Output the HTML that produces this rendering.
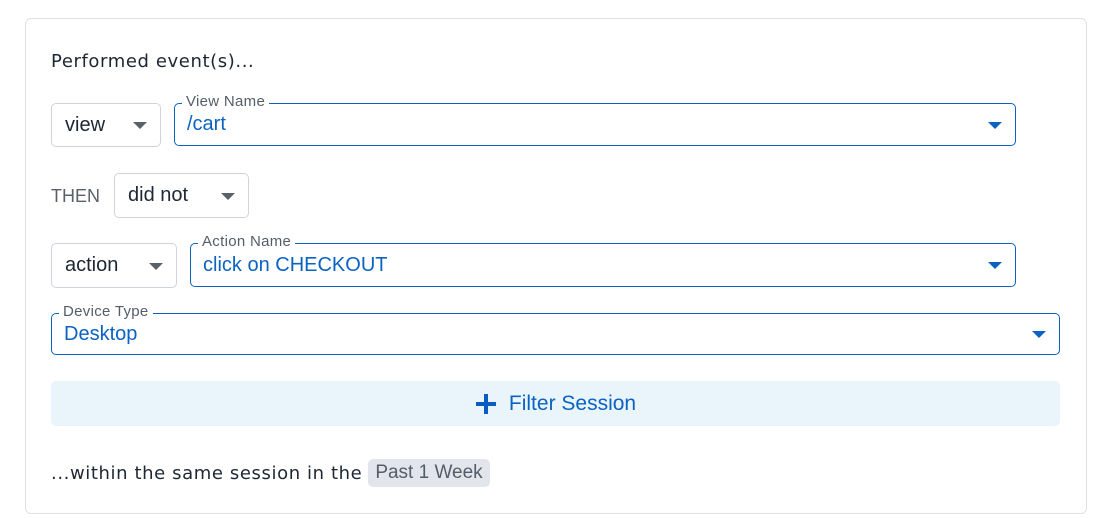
<!DOCTYPE html>
<html><head><style>
body{margin:0;width:1100px;height:518px;background:#fff;font-family:"Liberation Sans",sans-serif;position:relative;overflow:hidden}
.a{position:absolute;box-sizing:border-box}
.card{left:25px;top:18px;width:1062px;height:496px;border:1px solid #dfe1e6;border-radius:6px}
.sel{border:1px solid #cfd3dc;border-radius:5px;font-size:20px;color:#1d2633;display:flex;align-items:center;padding-left:13px}
.fld{border:1px solid #0a63c2;border-radius:5px;font-size:20px;color:#0a63c2;display:flex;align-items:center;padding-left:12px}
.lbl{position:absolute;top:-11px;left:7px;background:#fff;padding:0 4px;font-size:15px;color:#555d68;line-height:18px;letter-spacing:.3px}
.tri{position:absolute;width:0;height:0;border-left:7px solid transparent;border-right:7px solid transparent;border-top:7px solid #5b616b;top:50%;margin-top:-3px}
.fld .tri{border-top-color:#0a63c2}
.dj{font-family:"DejaVu Sans",sans-serif;letter-spacing:.6px}
</style></head><body>
<div class="a card"></div>
<div class="a dj" style="left:51px;top:51px;font-size:18px;color:#1d2633">Performed event(s)...</div>
<div class="a sel" style="left:51px;top:103px;width:110px;height:44px">view<span class="tri" style="right:13px"></span></div>
<div class="a fld" style="left:174px;top:103px;width:842px;height:43px"><span class="lbl">View Name</span>/cart<span class="tri" style="right:13px"></span></div>
<div class="a" style="left:51px;top:186px;font-size:18px;color:#5b616b">THEN</div>
<div class="a sel" style="left:114px;top:173px;width:135px;height:45px">did not<span class="tri" style="right:13px"></span></div>
<div class="a sel" style="left:51px;top:243px;width:126px;height:45px">action<span class="tri" style="right:13px"></span></div>
<div class="a fld" style="left:190px;top:243px;width:826px;height:44px"><span class="lbl">Action Name</span>click on CHECKOUT<span class="tri" style="right:13px"></span></div>
<div class="a fld" style="left:51px;top:313px;width:1009px;height:42px"><span class="lbl">Device Type</span>Desktop<span class="tri" style="right:13px"></span></div>
<div class="a" style="left:51px;top:381px;width:1009px;height:45px;background:#eaf4fb;border-radius:5px;display:flex;align-items:center;justify-content:center;color:#0a63c2;font-size:21px">
<svg width="22" height="22" viewBox="0 0 22 22" style="margin-right:12px"><path d="M11 1v20M1 11h20" stroke="#0a5bc2" stroke-width="4"/></svg>Filter Session</div>
<div class="a" style="left:51px;top:459px;font-size:18px;color:#1d2633;display:flex;align-items:center"><span class="dj">...within the same session in the</span><span style="margin-left:6px;background:#e3e5ec;color:#555d68;border-radius:5px;padding:3px 7px;font-size:19px">Past 1 Week</span></div>
</body></html>
